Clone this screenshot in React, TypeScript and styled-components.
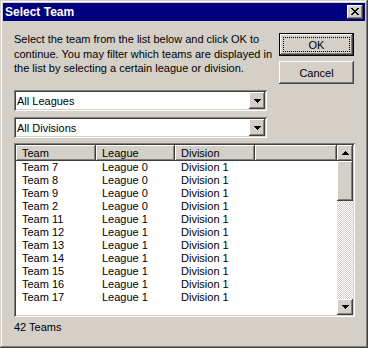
import React from "react";
import styled, { createGlobalStyle } from "styled-components";

const Global = createGlobalStyle`
  html, body { margin: 0; padding: 0; background: #d4d0c8; }
  body {
    font-family: "Liberation Sans", Arial, sans-serif;
    font-size: 11px;
    color: #000;
  }
  #root { width: 368px; height: 348px; }
`;

const raised = `
  box-shadow: inset -1px -1px #404040, inset 1px 1px #ffffff,
    inset -2px -2px #808080, inset 2px 2px #d4d0c8;
`;

const sunken = `
  box-shadow: inset 1px 1px #808080, inset -1px -1px #ffffff,
    inset 2px 2px #404040, inset -2px -2px #d4d0c8;
`;

const Window = styled.div`
  width: 368px;
  height: 348px;
  box-sizing: border-box;
  background: #d4d0c8;
  padding: 3px;
  box-shadow: inset -1px -1px #404040, inset 1px 1px #d4d0c8,
    inset -2px -2px #808080, inset 2px 2px #ffffff;
  display: flex;
  flex-direction: column;
`;

const TitleBar = styled.div`
  height: 18px;
  flex: none;
  background: #000080;
  color: #fff;
  display: flex;
  align-items: center;
  justify-content: space-between;
  padding: 0 2px;
  margin-bottom: 1px;
  font-weight: bold;
  font-size: 12px;
`;

const Title = styled.span`
  line-height: 18px;
`;

const CloseButton = styled.div`
  width: 16px;
  height: 14px;
  background: #d4d0c8;
  ${raised}
  display: flex;
  align-items: center;
  justify-content: center;
  svg { display: block; margin: 0 1px 1px 0; }
`;

const Client = styled.div`
  flex: 1;
  display: flex;
  flex-direction: column;
  padding: 0 10px 0 11px;
`;

const TopRow = styled.div`
  display: flex;
  justify-content: space-between;
  align-items: flex-start;
  height: 62px;
`;

const Intro = styled.p`
  margin: 10px 0 0 0;
  line-height: 14.5px;
  white-space: nowrap;
`;

const ButtonColumn = styled.div`
  display: flex;
  flex-direction: column;
  gap: 5px;
  margin: 11px 1px 0 0;
`;

const PushButton = styled.div<{ $default?: boolean }>`
  position: relative;
  width: 75px;
  height: 23px;
  box-sizing: border-box;
  background: #d4d0c8;
  display: flex;
  align-items: center;
  justify-content: center;
  font-size: 11px;
  ${({ $default }) =>
    $default
      ? `box-shadow: inset 0 0 0 1px #000, inset -2px -2px #404040, inset 2px 2px #ffffff,
          inset -3px -3px #808080, inset 3px 3px #d4d0c8;`
      : raised}
`;

const FocusRing = styled.span`
  position: absolute;
  inset: 4px;
  border: 1px dotted #000;
`;

const Combo = styled.div<{ $top: number }>`
  width: 253px;
  height: 21px;
  box-sizing: border-box;
  margin-top: ${({ $top }) => $top}px;
  background: #fff;
  ${sunken}
  padding: 2px;
  display: flex;
  align-items: center;
`;

const ComboText = styled.span`
  flex: 1;
  padding-left: 1px;
`;

const ArrowButton = styled.div<{ $h?: number }>`
  width: 16px;
  height: ${({ $h }) => $h ?? 16}px;
  flex: none;
  background: #d4d0c8;
  ${raised}
  display: flex;
  align-items: center;
  justify-content: center;
  svg { display: block; }
`;

const ListBox = styled.div`
  margin-top: 5px;
  height: 174px;
  box-sizing: border-box;
  background: #fff;
  ${sunken}
  padding: 2px;
  display: flex;
`;

const ListContent = styled.div`
  flex: 1;
  overflow: hidden;
  display: flex;
  flex-direction: column;
`;

const columns = "80px 79px 80px 1fr";

const HeaderRow = styled.div`
  display: grid;
  grid-template-columns: ${columns};
  height: 16px;
  flex: none;
`;

const HeaderCell = styled.div`
  background: #d4d0c8;
  ${raised}
  padding-left: 6px;
  line-height: 16px;
`;

const Row = styled.div`
  display: grid;
  grid-template-columns: ${columns};
  height: 13px;
  line-height: 13px;
  flex: none;
`;

const Cell = styled.div`
  padding-left: 6px;
  white-space: nowrap;
`;

const ScrollBar = styled.div`
  width: 16px;
  flex: none;
  display: flex;
  flex-direction: column;
`;

const Thumb = styled.div`
  height: 40px;
  flex: none;
  background: #d4d0c8;
  ${raised}
`;

const Track = styled.div`
  flex: 1;
  background-image: conic-gradient(#d4d0c8 25%, #ffffff 0 50%, #d4d0c8 0 75%, #ffffff 0);
  background-size: 2px 2px;
`;

const Status = styled.div`
  margin-top: 4px;
  line-height: 13px;
`;

const DownArrow = () => (
  <svg width="7" height="4" viewBox="0 0 7 4" shapeRendering="crispEdges">
    <path d="M0 0h7v1H0zM1 1h5v1H1zM2 2h3v1H2zM3 3h1v1H3z" fill="#000" />
  </svg>
);

const UpArrow = () => (
  <svg width="7" height="4" viewBox="0 0 7 4" shapeRendering="crispEdges">
    <path d="M3 0h1v1H3zM2 1h3v1H2zM1 2h5v1H1zM0 3h7v1H0z" fill="#000" />
  </svg>
);

const CloseGlyph = () => (
  <svg width="8" height="7" viewBox="0 0 8 7" shapeRendering="crispEdges">
    <path
      d="M0 0h2v1H0zM6 0h2v1H6zM1 1h2v1H1zM5 1h2v1H5zM2 2h4v1H2zM3 3h2v1H3zM2 4h4v1H2zM1 5h2v1H1zM5 5h2v1H5zM0 6h2v1H0zM6 6h2v1H6z"
      fill="#000"
    />
  </svg>
);

const teams: [string, string, string][] = [
  ["Team 7", "League 0", "Division 1"],
  ["Team 8", "League 0", "Division 1"],
  ["Team 9", "League 0", "Division 1"],
  ["Team 2", "League 0", "Division 1"],
  ["Team 11", "League 1", "Division 1"],
  ["Team 12", "League 1", "Division 1"],
  ["Team 13", "League 1", "Division 1"],
  ["Team 14", "League 1", "Division 1"],
  ["Team 15", "League 1", "Division 1"],
  ["Team 16", "League 1", "Division 1"],
  ["Team 17", "League 1", "Division 1"],
];

export default function App() {
  return (
    <>
      <Global />
      <Window>
        <TitleBar>
          <Title>Select Team</Title>
          <CloseButton>
            <CloseGlyph />
          </CloseButton>
        </TitleBar>
        <Client>
          <TopRow>
            <Intro>
              Select the team from the list below and click OK to
              <br />
              continue. You may filter which teams are displayed in
              <br />
              the list by selecting a certain league or division.
            </Intro>
            <ButtonColumn>
              <PushButton $default>
                OK
                <FocusRing />
              </PushButton>
              <PushButton>Cancel</PushButton>
            </ButtonColumn>
          </TopRow>
          <Combo $top={6}>
            <ComboText>All Leagues</ComboText>
            <ArrowButton $h={17}>
              <DownArrow />
            </ArrowButton>
          </Combo>
          <Combo $top={6}>
            <ComboText>All Divisions</ComboText>
            <ArrowButton $h={17}>
              <DownArrow />
            </ArrowButton>
          </Combo>
          <ListBox>
            <ListContent>
              <HeaderRow>
                <HeaderCell>Team</HeaderCell>
                <HeaderCell>League</HeaderCell>
                <HeaderCell>Division</HeaderCell>
                <HeaderCell />
              </HeaderRow>
              {teams.map(([t, l, d]) => (
                <Row key={t}>
                  <Cell>{t}</Cell>
                  <Cell>{l}</Cell>
                  <Cell>{d}</Cell>
                  <Cell />
                </Row>
              ))}
            </ListContent>
            <ScrollBar>
              <ArrowButton>
                <UpArrow />
              </ArrowButton>
              <Thumb />
              <Track />
              <ArrowButton>
                <DownArrow />
              </ArrowButton>
            </ScrollBar>
          </ListBox>
          <Status>42 Teams</Status>
        </Client>
      </Window>
    </>
  );
}
